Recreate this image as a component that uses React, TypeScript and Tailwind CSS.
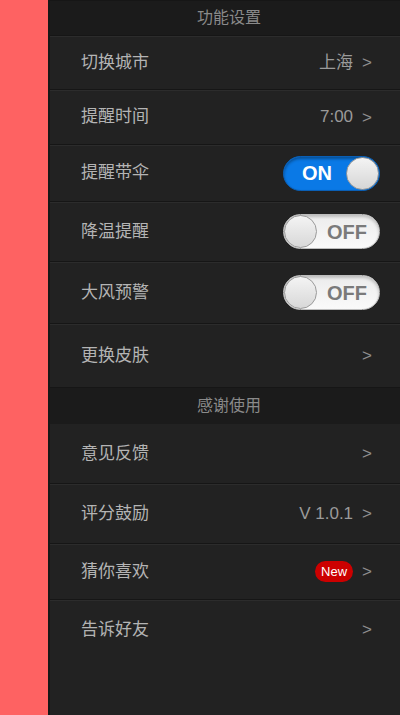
import React from "react";

const font = { fontFamily: '"Liberation Sans", "Noto Sans CJK SC", sans-serif' };

function Chevron() {
  return <span className="text-[17px] text-[#8f8f8f] ml-[9px] leading-none">&gt;</span>;
}

function Toggle({ on }: { on: boolean }) {
  if (on) {
    return (
      <div className="w-[97px] h-[35px] rounded-full bg-[#0a79e6] border border-[#0a5fb5] flex items-center relative shadow-[inset_0_2px_3px_rgba(0,0,0,0.35)]">
        <span className="text-white font-bold text-[20px] ml-[18px]">ON</span>
        <div className="absolute right-[0px] top-[0px] w-[33px] h-[33px] rounded-full bg-gradient-to-b from-[#f4f4f4] to-[#d6d6d6] border border-[#9a9a9a]" />
      </div>
    );
  }
  return (
    <div className="w-[97px] h-[35px] rounded-full bg-gradient-to-b from-[#ececec] to-[#fafafa] border border-[#bdbdbd] flex items-center relative shadow-[inset_0_2px_3px_rgba(0,0,0,0.2)]">
      <div className="absolute left-[0px] top-[0px] w-[33px] h-[33px] rounded-full bg-gradient-to-b from-[#f4f4f4] to-[#d8d8d8] border border-[#9a9a9a]" />
      <span className="text-[#7a7a7a] font-bold text-[20px] ml-[43px]">OFF</span>
    </div>
  );
}

function Row({ label, h, right, first }: { label: string; h: number; right?: React.ReactNode; first?: boolean }) {
  return (
    <div
      className={`flex items-center pl-[31px] pr-[28px] ${first ? "" : "border-t border-t-[#161616] shadow-[inset_0_1px_0_#2c2c2c]"}`}
      style={{ height: h }}
    >
      <span className="text-[17px] text-[#b4b4b4] flex-1">{label}</span>
      <div className="flex items-center">{right}</div>
    </div>
  );
}

function Header({ label, h }: { label: string; h: number }) {
  return (
    <div className="flex items-center justify-center bg-[#1b1b1b] border-t border-t-[#161616] text-[16px] text-[#8a8a8a] pl-[8px]" style={{ height: h }}>
      {label}
    </div>
  );
}

function Value({ text }: { text: string }) {
  return <span className="text-[17px] text-[#9a9a9a]">{text}</span>;
}

export default function App() {
  return (
    <div className="flex w-[400px] h-[715px] overflow-hidden" style={font}>
      <div className="w-[48px] bg-[#fe6262] shrink-0" />
      <div className="w-[2px] bg-[#171717] shrink-0" />
      <div className="flex-1 bg-[#222222] flex flex-col">
        <Header label="功能设置" h={35} />
        <Row label="切换城市" h={54} right={<><Value text="上海" /><Chevron /></>} />
        <Row label="提醒时间" h={55} right={<><Value text="7:00" /><Chevron /></>} />
        <Row label="提醒带伞" h={57} right={<div className="mr-[-8px]"><Toggle on /></div>} />
        <Row label="降温提醒" h={60} right={<div className="mr-[-8px]"><Toggle on={false} /></div>} />
        <Row label="大风预警" h={62} right={<div className="mr-[-8px]"><Toggle on={false} /></div>} />
        <Row label="更换皮肤" h={64} right={<Chevron />} />
        <Header label="感谢使用" h={37} />
        <Row label="意见反馈" h={59} first right={<Chevron />} />
        <Row label="评分鼓励" h={60} right={<><Value text="V 1.0.1" /><Chevron /></>} />
        <Row
          label="猜你喜欢"
          h={56}
          right={
            <>
              <span className="bg-[#cc0000] text-white text-[13px] rounded-full w-[38px] h-[21px] flex items-center justify-center">New</span>
              <Chevron />
            </>
          }
        />
        <Row label="告诉好友" h={60} right={<Chevron />} />
        <div className="flex-1" />
      </div>
    </div>
  );
}
